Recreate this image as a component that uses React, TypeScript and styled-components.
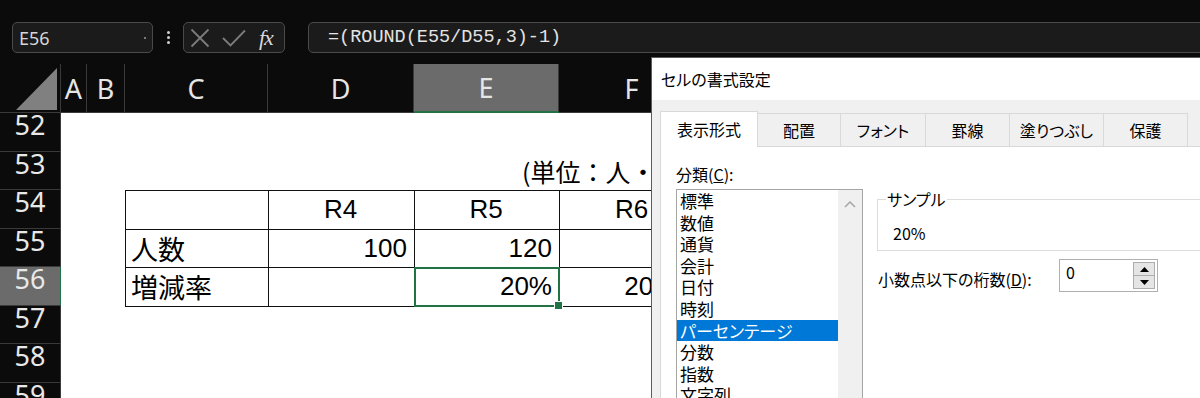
import React from "react";
import styled, { createGlobalStyle } from "styled-components";

const GlobalStyle = createGlobalStyle`
  html, body { margin: 0; padding: 0; background: #0b0b0b; }
  body { font-family: "Noto Sans", "Noto Sans CJK JP", sans-serif; }
  * { box-sizing: border-box; }
`;

const GREEN = "#217346";
const HEAD_LINE = "#3a3a3a";

const Page = styled.div`
  position: relative;
  width: 1200px;
  height: 398px;
  overflow: hidden;
  background: #0b0b0b;
`;

/* ---------- formula bar ---------- */
const FormulaBar = styled.div`
  display: flex;
  align-items: flex-start;
  height: 64px;
  padding: 22px 0 0 12px;
`;

const NameBox = styled.div`
  display: flex;
  align-items: center;
  justify-content: space-between;
  width: 141px;
  height: 31px;
  padding: 0 6px 0 6px;
  border: 1px solid #4a4a4a;
  border-radius: 5px;
  background: #1b1b1b;
  color: #d6d6d6;
  font: 18px "Noto Sans", sans-serif;
`;

const NameDot = styled.span`
  width: 2px;
  height: 2px;
  border-radius: 1px;
  background: #9a9a9a;
`;

const Kebab = styled.div`
  display: flex;
  flex-direction: column;
  align-items: center;
  justify-content: center;
  gap: 2px;
  width: 30px;
  height: 31px;
`;

const KebabDot = styled.span`
  width: 3px;
  height: 3px;
  border-radius: 50%;
  background: #d0d0d0;
`;

const FxButtons = styled.div`
  display: flex;
  align-items: center;
  width: 102px;
  height: 31px;
  padding-left: 6px;
  gap: 12px;
  border: 1px solid #4a4a4a;
  border-radius: 5px;
  background: #1b1b1b;
`;

const FxLabel = styled.span`
  margin-left: 1px;
  color: #d8d8d8;
  font: italic 22px "Liberation Serif", serif;
  letter-spacing: -1px;
`;

const FormulaInput = styled.div`
  flex: 1;
  display: flex;
  align-items: center;
  height: 31px;
  margin: 0 -20px 0 23px;
  padding-left: 19px;
  border: 1px solid #4a4a4a;
  border-radius: 5px;
  background: #1b1b1b;
  color: #e4e4e4;
  font: 18.5px "Liberation Mono", monospace;
`;

/* ---------- sheet ---------- */
const Sheet = styled.div`
  display: flex;
  flex-direction: column;
`;

const HeaderRow = styled.div`
  display: flex;
  flex: none;
  height: 49px;
`;

const Corner = styled.div`
  flex: none;
  width: 61px;
  height: 49px;
  border-right: 1px solid ${HEAD_LINE};
  border-bottom: 1px solid ${HEAD_LINE};
`;

const ColHead = styled.div<{ $w: number; $sel?: boolean }>`
  flex: none;
  display: flex;
  align-items: center;
  justify-content: center;
  width: ${(p) => p.$w}px;
  height: 49px;
  border-right: 1px solid ${HEAD_LINE};
  border-bottom: ${(p) => (p.$sel ? `2px solid ${GREEN}` : `1px solid ${HEAD_LINE}`)};
  background: ${(p) => (p.$sel ? "#6b6b6b" : "transparent")};
  color: #e6e6e6;
  font: 27px "Noto Sans", sans-serif;
  overflow: hidden;
`;

const Row = styled.div`
  display: flex;
  flex: none;
  height: 38.5px;
`;

const RowHead = styled.div<{ $sel?: boolean }>`
  flex: none;
  width: 61px;
  height: 100%;
  padding-top: 1px;
  text-align: center;
  border-right: 1px solid ${(p) => (p.$sel ? GREEN : HEAD_LINE)};
  border-bottom: 1px solid ${HEAD_LINE};
  background: ${(p) => (p.$sel ? "#6b6b6b" : "#0b0b0b")};
  color: #e8e8e8;
  font: 27px/22px "Noto Sans", sans-serif;
`;

const Cell = styled.div<{
  $w: number;
  $top?: boolean;
  $left?: boolean;
  $align?: "left" | "right" | "center";
  $sel?: boolean;
  $padR?: number;
}>`
  position: ${(p) => (p.$sel ? "relative" : "static")};
  flex: none;
  display: flex;
  align-items: center;
  justify-content: ${(p) =>
    p.$align === "right" ? "flex-end" : p.$align === "center" ? "center" : "flex-start"};
  width: ${(p) => p.$w}px;
  height: 100%;
  padding: 0 ${(p) => p.$padR ?? 7}px 0 5px;
  border-top: ${(p) => (p.$top ? "1px solid #111" : "none")};
  border-left: ${(p) => (p.$left ? "1px solid #111" : "none")};
  background: #fff;
  color: #000;
  font: 26px "Liberation Sans", "Noto Sans CJK JP", sans-serif;
  white-space: nowrap;

  ${(p) =>
    p.$sel &&
    `
    &::after {
      content: "";
      position: absolute;
      left: -1px; top: -1px; right: -1px; bottom: -1px;
      border: 2px solid ${GREEN};
      z-index: 2;
    }
    &::before {
      content: "";
      position: absolute;
      right: -4px; bottom: -4px;
      width: 7px; height: 7px;
      background: ${GREEN};
      border: 1px solid #fff;
      z-index: 3;
    }
  `}
`;

const CjkText = styled.span<{ $size?: number }>`
  font-family: "Noto Sans CJK JP", sans-serif;
  font-size: ${(p) => p.$size ?? 27}px;
`;

/* ---------- dialog ---------- */
const Dialog = styled.div`
  position: absolute;
  left: 651px;
  top: 57px;
  width: 560px;
  height: 420px;
  display: flex;
  flex-direction: column;
  border-left: 1px solid #5c5c5c;
  border-top: 1px solid #5c5c5c;
  background: #f0f0f0;
  color: #000;
  font-family: "Noto Sans CJK JP", sans-serif;
  font-feature-settings: "palt";
`;

const TitleBar = styled.div`
  flex: none;
  display: flex;
  align-items: center;
  height: 42px;
  padding-left: 9px;
  background: #fff;
  font-size: 16px;
`;

const DialogBody = styled.div`
  flex: 1;
  display: flex;
  flex-direction: column;
  padding: 11px 0 0 8px;
`;

const TabStrip = styled.div`
  flex: none;
  display: flex;
  align-items: flex-end;
  height: 35px;
`;

const Tab = styled.div<{ $w: number; $active?: boolean }>`
  position: relative;
  z-index: ${(p) => (p.$active ? 2 : 1)};
  flex: none;
  display: flex;
  align-items: center;
  justify-content: center;
  width: ${(p) => p.$w}px;
  height: ${(p) => (p.$active ? 36 : 33)}px;
  margin-right: -1px;
  margin-bottom: ${(p) => (p.$active ? -1 : 0)}px;
  padding-bottom: ${(p) => (p.$active ? 2 : 0)}px;
  border: 1px solid #d9d9d9;
  border-bottom: none;
  background: ${(p) => (p.$active ? "#fff" : "#f0f0f0")};
  font-size: 16px;
`;

const Panel = styled.div`
  flex: 1;
  display: flex;
  gap: 14px;
  padding: 17px 0 0 15px;
  border: 1px solid #d9d9d9;
  background: #fff;
`;

const LeftCol = styled.div`
  flex: none;
  display: flex;
  flex-direction: column;
  width: 187px;
`;

const FieldLabel = styled.div`
  flex: none;
  font-size: 16px;
  line-height: 20px;
  white-space: nowrap;
`;

const ListBox = styled.div`
  flex: none;
  display: flex;
  height: 260px;
  margin-top: 5px;
  border: 1px solid #a6a6a6;
`;

const ListItems = styled.div`
  flex: 1;
  display: flex;
  flex-direction: column;
  overflow: hidden;
`;

const ListItem = styled.div<{ $sel?: boolean }>`
  flex: none;
  height: 21.6px;
  padding-left: 3px;
  line-height: 21.6px;
  font-size: 17px;
  background: ${(p) => (p.$sel ? "#0078d7" : "transparent")};
  color: ${(p) => (p.$sel ? "#fff" : "#000")};
  white-space: nowrap;
`;

const ScrollTrack = styled.div`
  display: flex;
  justify-content: center;
  width: 24px;
  padding-top: 11px;
  background: #f0f0f0;
`;

const RightCol = styled.div`
  flex: 1;
  display: flex;
  flex-direction: column;
  padding-top: 25px;
`;

const SampleBox = styled.fieldset`
  flex: none;
  margin: 0;
  min-width: 0;
  padding: 0 16px 7px 15px;
  border: 1px solid #dcdcdc;
`;

const SampleLegend = styled.legend`
  margin-left: -7px;
  padding: 0 1px;
  font-size: 16px;
  line-height: 20px;
`;

const SampleValue = styled.div`
  margin-top: 14px;
  font-size: 16px;
  line-height: 20px;
`;

const DecimalRow = styled.div`
  flex: none;
  display: flex;
  align-items: flex-start;
  margin-top: 8px;
`;

const DecimalLabel = styled(FieldLabel)`
  width: 181px;
  margin-left: 1px;
  padding-top: 10px;
`;

const SpinInput = styled.div`
  display: flex;
  width: 99px;
  height: 33px;
  border: 1px solid #b0b0b0;
  background: #fff;
`;

const SpinValue = styled.div`
  flex: 1;
  padding: 2px 0 0 6px;
  font-size: 16px;
  line-height: 20px;
`;

const SpinButtons = styled.div`
  display: flex;
  flex-direction: column;
  width: 22px;
  margin: 2px 2px 2px 0;
`;

const SpinBtn = styled.div`
  flex: 1;
  display: flex;
  align-items: center;
  justify-content: center;
  border: 1px solid #adadad;
  background: #e5e5e5;
  & + & { border-top: none; }
`;

/* ---------- data ---------- */
const COLS = [
  { id: "A", w: 26 },
  { id: "B", w: 38 },
  { id: "C", w: 143 },
  { id: "D", w: 146 },
  { id: "E", w: 145 },
  { id: "F", w: 146 },
  { id: "G", w: 146 },
  { id: "H", w: 146 },
  { id: "I", w: 146 },
];

type CellSpec = {
  text?: React.ReactNode;
  align?: "left" | "right" | "center";
  sel?: boolean;
  padR?: number;
};
type RowSpec = { n: number; cells: Record<string, CellSpec>; top?: boolean; left?: boolean };

const TABLE_COLS = ["C", "D", "E", "F", "G", "H", "I"];

const ROWS: RowSpec[] = [
  { n: 52, cells: {} },
  {
    n: 53,
    cells: {
      F: { text: <CjkText $size={25}>(単位：人・%)</CjkText>, align: "right", padR: 18 },
    },
  },
  {
    n: 54,
    top: true,
    left: true,
    cells: {
      D: { text: "R4", align: "center" },
      E: { text: "R5", align: "center" },
      F: { text: "R6", align: "center" },
    },
  },
  {
    n: 55,
    top: true,
    left: true,
    cells: {
      C: { text: <CjkText>人数</CjkText> },
      D: { text: "100", align: "right" },
      E: { text: "120", align: "right" },
      F: { text: "144", align: "right" },
    },
  },
  {
    n: 56,
    top: true,
    left: true,
    cells: {
      C: { text: <CjkText>増減率</CjkText> },
      E: { text: "20%", align: "right", sel: true },
      F: { text: "20.0%", align: "right" },
    },
  },
  { n: 57, top: true, cells: {} },
  { n: 58, cells: {} },
  { n: 59, cells: {} },
];

const CATEGORIES = [
  "標準",
  "数値",
  "通貨",
  "会計",
  "日付",
  "時刻",
  "パーセンテージ",
  "分数",
  "指数",
  "文字列",
  "その他",
  "ユーザー定義",
];

const TABS = [
  { label: "表示形式", w: 98, active: true },
  { label: "配置", w: 84 },
  { label: "フォント", w: 86 },
  { label: "罫線", w: 85 },
  { label: "塗りつぶし", w: 95 },
  { label: "保護", w: 85 },
];

export default function App() {
  return (
    <>
      <GlobalStyle />
      <Page>
        <FormulaBar>
          <NameBox>
            E56
            <NameDot />
          </NameBox>
          <Kebab>
            <KebabDot />
            <KebabDot />
            <KebabDot />
          </Kebab>
          <FxButtons>
            <svg width="20" height="20" viewBox="0 0 20 20">
              <path d="M1.5 1.5 L18.5 18.5 M18.5 1.5 L1.5 18.5" stroke="#7c7c7c" strokeWidth="1.8" fill="none" />
            </svg>
            <svg width="24" height="18" viewBox="0 0 24 18">
              <path d="M1 9 L8.5 16.5 L23 1.5" stroke="#7c7c7c" strokeWidth="1.8" fill="none" />
            </svg>
            <FxLabel>fx</FxLabel>
          </FxButtons>
          <FormulaInput>=(ROUND(E55/D55,3)-1)</FormulaInput>
        </FormulaBar>

        <Sheet>
          <HeaderRow>
            <Corner>
              <svg width="60" height="48" viewBox="0 0 60 48">
                <polygon points="16,46 57,46 57,4" fill="#808080" />
              </svg>
            </Corner>
            {COLS.map((c) => (
              <ColHead key={c.id} $w={c.w} $sel={c.id === "E"}>
                {c.id}
              </ColHead>
            ))}
          </HeaderRow>
          {ROWS.map((r) => (
            <Row key={r.n}>
              <RowHead $sel={r.n === 56}>{r.n}</RowHead>
              {COLS.map((c) => {
                const inTable = TABLE_COLS.includes(c.id);
                const spec = r.cells[c.id] || {};
                return (
                  <Cell
                    key={c.id}
                    $w={c.w}
                    $top={inTable && r.top}
                    $left={inTable && r.left}
                    $align={spec.align}
                    $sel={spec.sel}
                    $padR={spec.padR}
                  >
                    {spec.text}
                  </Cell>
                );
              })}
            </Row>
          ))}
        </Sheet>

        <Dialog>
          <TitleBar>セルの書式設定</TitleBar>
          <DialogBody>
            <TabStrip>
              {TABS.map((t) => (
                <Tab key={t.label} $w={t.w} $active={t.active}>
                  {t.label}
                </Tab>
              ))}
            </TabStrip>
            <Panel>
              <LeftCol>
                <FieldLabel>
                  分類(<u>C</u>):
                </FieldLabel>
                <ListBox>
                  <ListItems>
                    {CATEGORIES.map((c) => (
                      <ListItem key={c} $sel={c === "パーセンテージ"}>
                        {c}
                      </ListItem>
                    ))}
                  </ListItems>
                  <ScrollTrack>
                    <svg width="12" height="7" viewBox="0 0 12 7">
                      <path d="M1 6 L6 1 L11 6" stroke="#a6a6a6" strokeWidth="1.5" fill="none" />
                    </svg>
                  </ScrollTrack>
                </ListBox>
              </LeftCol>
              <RightCol>
                <SampleBox>
                  <SampleLegend>サンプル</SampleLegend>
                  <SampleValue>20%</SampleValue>
                </SampleBox>
                <DecimalRow>
                  <DecimalLabel>
                    小数点以下の桁数(<u>D</u>):
                  </DecimalLabel>
                  <SpinInput>
                    <SpinValue>0</SpinValue>
                    <SpinButtons>
                      <SpinBtn>
                        <svg width="9" height="5" viewBox="0 0 9 5">
                          <polygon points="0,5 9,5 4.5,0" fill="#000" />
                        </svg>
                      </SpinBtn>
                      <SpinBtn>
                        <svg width="9" height="5" viewBox="0 0 9 5">
                          <polygon points="0,0 9,0 4.5,5" fill="#000" />
                        </svg>
                      </SpinBtn>
                    </SpinButtons>
                  </SpinInput>
                </DecimalRow>
              </RightCol>
            </Panel>
          </DialogBody>
        </Dialog>
      </Page>
    </>
  );
}
